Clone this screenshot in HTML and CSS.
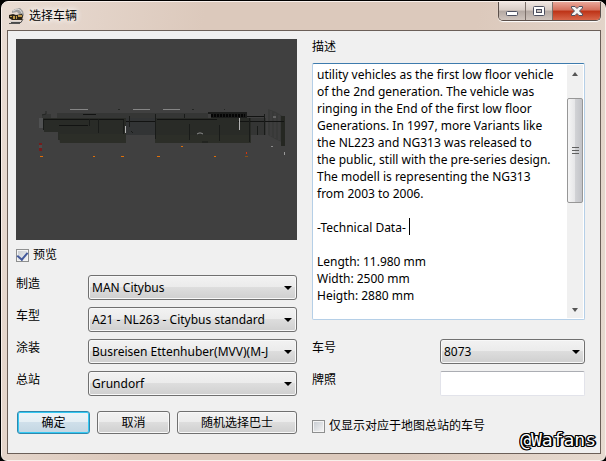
FILE: index.html
```html
<!DOCTYPE html>
<html lang="zh-CN">
<head>
<meta charset="utf-8">
<title>选择车辆</title>
<link rel="stylesheet" href="styles.css">
</head>
<body>
<main class="window">
  <header class="titlebar">
    <svg class="app-icon" width="16" height="16" viewBox="0 0 16 16" aria-hidden="true">
      <path d="M3 3L6 1 11 0 14 3 15 7 12 12 9 12 10 6 8 4 3 5Z" fill="#9d9d9d"/>
      <path d="M4 3L8 1 11 2 13 5" fill="none" stroke="#dcdcdc"/>
      <path d="M0 7L4 6 7 7 13 6 14 8 13 12 3 12 0 10Z" fill="#2b2418"/>
      <path d="M1 8h2v1H1zM4 8h2v3H4zM7 8h1v3H7zM9 7h4v2H9z" fill="#c09a4a"/>
      <path d="M2 14.500H12L14 11" fill="none" stroke="#4a4a4a"/>
      <path d="M1 13.500H11" stroke="#d5d0cc"/>
      <path d="M0 15.500H11" stroke="#555"/>
    </svg>
    <h1 class="title">选择车辆</h1>
    <div class="window-buttons">
      <button class="wb" type="button" aria-label="最小化"><svg class="min" width="12" height="5" viewBox="0 0 12 5"><rect x=".5" y=".5" width="11" height="4" rx="1" fill="#fff" stroke="#4d5060"/></svg></button>
      <button class="wb" type="button" aria-label="最大化"><svg width="12" height="10" viewBox="0 0 12 10"><rect x=".5" y=".5" width="11" height="9" rx="1" fill="#fff" stroke="#4d5060"/><rect x="3.500" y="3.500" width="5" height="3" fill="#c9c2be" stroke="#4d5060"/></svg></button>
      <button class="wb close" type="button" aria-label="关闭"><svg width="12" height="10" viewBox="0 0 12 10"><path d="M.5 .5H4L6 2.500 8 .5H11.500V2L8.500 5 11.500 8V9.500H8L6 7.500 4 9.500H.5V8L3.500 5 .5 2Z" fill="#f4f4f4" stroke="#4d5060"/></svg></button>
    </div>
  </header>
  <form class="client">
    <section class="column left">
      <svg class="preview" viewBox="0 0 281 201" role="img" aria-label="预览">
        <rect width="281" height="201" fill="#404040"/>
        <path d="M23 79H27V89H23Z" fill="#505152"/>
        <path d="M41 74H192V79H41ZM26 75H35V79H26Z" fill="#353635"/>
        <path d="M27 79H110V104H44V101H42V93H28V90H27Z" fill="#292b27"/>
        <path d="M110 79H139V96H110Z" fill="#323435"/>
        <path d="M139 79H235V104H139Z" fill="#292b27"/>
        <path d="M235 79H250V96H235Z" fill="#343534"/>
        <path d="M43 95H110V104H44ZM139 96H235V104H139Z" fill="#2c2e28"/>
        <path d="M252 70L260 73 268 78V104L261 101 252 96Z" fill="#383938"/>
        <path d="M255 72V97M259 74V99M263 76V101" stroke="#424342"/>
        <path d="M265 77H269V107H265Z" fill="#252722"/>
        <path d="M27 80.500H108M110 82.500H139M141 80.500H201M43 86.500H72M67 75.500H80M134 82.500H139M230 77.500H249M222 82.500H268" stroke="#121312"/>
        <path d="M192 73H231V79H195V75H192Z" fill="#1b1c1b"/>
        <path d="M195 76.500H229" stroke="#050505" stroke-width="3" stroke-dasharray="2 1"/>
        <path d="M27.500 80V91M73.500 80V87M82.500 80V94M107.500 81V95M113.500 77V88M168.500 75V79M173.500 85V101M139.500 75V100M233.500 79V103M241.500 87V96M248.500 75V96M203.500 86V102M115 92L117 94M186 103H192" stroke="#191b19"/>
        <path d="M26 76L30 75M30 72V75M102 70.500H104M176 70.500H178M208 70.500H209" stroke="#242624"/>
        <path d="M54 70.500H72M117 70.500H134M147 70.500H164" stroke="#858585"/>
        <path d="M109.500 87V94M223.500 79V91" stroke="#b3b3b3"/>
        <path d="M181 95L183 94H185L187 95M255 107.500H257M257 78H260" fill="none" stroke="#8b8b8b"/>
        <path d="M23 104H26V112H23Z" fill="#741c1c"/><path d="M23 106H26V109H23Z" fill="#4b4b4b"/>
        <path d="M24 117.500H27M77 117.500H79M105 117.500H108M141 117.500H144M165 107.500H167M198 117.500H200" stroke="#e06f08"/>
        <path d="M230.500 113V115" stroke="#d8320d"/><path d="M229 117.500H232" stroke="#895016"/>
        <path d="M268.500 113V116" stroke="#999"/>
      </svg>
      <label class="check"><input type="checkbox" checked>预览</label>
      <div class="fields">
        <label for="make">制造</label><div class="combo"><select id="make"><option>MAN Citybus</option></select></div>
        <label for="model">车型</label><div class="combo"><select id="model"><option>A21 - NL263 - Citybus standard</option></select></div>
        <label for="paint">涂装</label><div class="combo"><select id="paint"><option>Busreisen Ettenhuber(MVV)(M-J</option></select></div>
        <label for="depot">总站</label><div class="combo"><select id="depot"><option>Grundorf</option></select></div>
      </div>
      <div class="actions">
        <button class="btn default" type="button">确定</button>
        <button class="btn" type="button">取消</button>
        <button class="btn wide" type="button">随机选择巴士</button>
      </div>
    </section>
    <section class="column right">
      <label class="desc-label" for="desc">描述</label>
      <div class="desc">
        <textarea id="desc" wrap="off">utility vehicles as the first low floor vehicle
of the 2nd generation. The vehicle was
ringing in the End of the first low floor
Generations. In 1997, more Variants like
the NL223 and NG313 was released to
the public, still with the pre-series design.
The modell is representing the NG313
from 2003 to 2006.

-Technical Data-

Length: 11.980 mm
Width: 2500 mm
Heigth: 2880 mm</textarea>
        <div class="scrollbar" aria-hidden="true">
          <span class="arrow up"></span>
          <span class="thumb"><i></i><i></i><i></i></span>
          <span class="arrow down"></span>
        </div>
        <span class="caret"></span>
      </div>
      <div class="fields">
        <label for="number">车号</label><div class="combo"><select id="number"><option>8073</option></select></div>
        <label for="plate">牌照</label><input class="text" id="plate" type="text">
      </div>
      <label class="check depot-only"><input type="checkbox">仅显示对应于地图总站的车号</label>
    </section>
    <span class="watermark">@Wafans</span>
  </form>
</main>
</body>
</html>
```
FILE: styles.css
```css
* { box-sizing: border-box; }

body {
  margin: 0;
  background: #000;
  color: #000;
  font: 12px/16px "Noto Sans", "Noto Sans CJK SC", sans-serif;
}

button, select, input, textarea { font: inherit; color: inherit; margin: 0; }

.window {
  margin: 1px 0 0 1px;
  padding: 0 4px 6px 5px;
  min-height: calc(100vh - 1px);
  display: flex;
  flex-direction: column;
  border: 1px solid #f8efea;
  border-radius: 7px 7px 6px 6px;
  background: linear-gradient(100deg, #e9dcd3, #dcc9bc 30%, #dcc9bc 70%, #e6dad0);
}

.titlebar { height: 28px; display: flex; align-items: flex-start; }
.app-icon { margin: 6px 4px 0 2px; }
.title { flex: 1; margin: 6px 0 0; font-size: 12px; line-height: 16px; font-weight: 400; text-shadow: 0 0 6px #fff, 0 0 6px #fff; }

.window-buttons {
  display: flex;
  height: 19px;
  border: 1px solid #5b4f4a;
  border-top: 0;
  border-radius: 0 0 5px 5px;
  overflow: hidden;
  box-shadow: 0 1px 1px #fff;
}
.wb {
  width: 27px;
  padding: 0;
  border: 0;
  border-right: 1px solid #7c706a;
  display: grid;
  place-items: center;
  background: linear-gradient(#efe6e1, #d8cdc6 45%, #b3a8a2 50%, #cfc4bd);
}
.wb .min { margin-top: 5px; }
.wb.close { width: 47px; border: 0; background: linear-gradient(#e9a799, #d4705c 45%, #bd3216 50%, #d8664a); }

.client {
  position: relative;
  flex: 1;
  display: flex;
  align-items: flex-start;
  gap: 15px;
  padding: 8px 15px 8px 8px;
  border: 1px solid #6b5f58;
  background: #f0f0f0;
}
.column { display: flex; flex-direction: column; min-width: 0; }
.left { flex: 281; }
.right { flex: 273; }

.preview { display: block; width: 100%; height: auto; }

.check { display: flex; align-items: center; gap: 4px; height: 16px; margin-top: 7px; white-space: nowrap; }
.check input {
  appearance: none;
  width: 13px;
  height: 13px;
  border: 1px solid #8e8f8f;
  background: linear-gradient(135deg, #c5cad0, #f6f6f6);
  box-shadow: inset 0 0 0 1px #f4f4f4;
  display: grid;
  place-items: center;
}
.check input:checked::before {
  content: "";
  width: 5px;
  height: 8px;
  margin-bottom: 2px;
  border: solid #43599b;
  border-width: 0 2px 2px 0;
  transform: rotate(40deg);
}

.fields { display: grid; grid-template-columns: 72px 1fr; row-gap: 7px; margin-top: 12px; }
.fields label { padding-top: 1px; }
.right .fields { grid-template-columns: 128px 1fr; margin-top: 19px; }

.combo { position: relative; height: 25px; }
.combo::after {
  content: "";
  position: absolute;
  right: 5px;
  top: 11px;
  border: 4px solid transparent;
  border-top-color: #000;
  border-bottom: 0;
}
.combo select {
  appearance: none;
  width: 100%;
  height: 100%;
  padding: 0 19px 0 3px;
  border: 1px solid #707070;
  border-radius: 3px;
  background: linear-gradient(#f2f2f2, #ebebeb 49%, #dddddd 50%, #cfcfcf);
  box-shadow: inset 0 0 0 1px #f8f8f8;
}
.text { width: 100%; min-width: 0; height: 25px; padding: 0 4px; border: 1px solid #e2e3ea; border-top-color: #abadb3; border-radius: 2px; background: #fff; }

.actions { display: flex; gap: 7px; margin: 15px 0 0 1px; }
.btn {
  width: 73px;
  height: 23px;
  padding: 0;
  border: 1px solid #707070;
  border-radius: 3px;
  background: linear-gradient(#f2f2f2, #ebebeb 49%, #dddddd 50%, #cfcfcf);
  box-shadow: inset 0 0 0 1px #f8f8f8;
}
.btn.default { border-color: #2f88ad; box-shadow: inset 0 0 0 1px #35c9f3; background: linear-gradient(#eef4f8, #e4eef4 49%, #cfdfea 50%, #c3d6e2); }
.btn.wide { width: auto; flex: 1; }

.desc {
  position: relative;
  display: flex;
  height: 257px;
  margin-top: 8px;
  border: 1px solid #b5cfe7;
  border-top-color: #3d7bad;
  border-radius: 2px;
  background: #fff;
}
.desc textarea {
  flex: 1;
  min-width: 0;
  padding: 2px 0 0 4px;
  border: 0;
  outline: 0;
  resize: none;
  overflow: hidden;
  background: none;
  line-height: 17px;
}
.scrollbar { width: 16px; margin: 1px; display: flex; flex-direction: column; background: #f0f0f0; }
.arrow { height: 17px; margin-top: auto; display: grid; place-items: center; }
.up { height: 33px; margin: 0; padding-bottom: 16px; }
.arrow::before { content: ""; border: 3px solid transparent; }
.up::before { border-bottom: 4px solid #555; border-top: 0; }
.down::before { border-top: 4px solid #555; border-bottom: 0; }
.thumb {
  height: 105px;
  display: flex;
  flex-direction: column;
  align-items: center;
  justify-content: center;
  gap: 2px;
  border: 1px solid #979797;
  border-radius: 2px;
  background: linear-gradient(90deg, #f5f5f5, #e6e6e8 49%, #d2d3d6 50%, #c2c3c8);
}
.thumb i { width: 7px; height: 1px; background: #606060; }
.caret { position: absolute; left: 96px; top: 154px; width: 1px; height: 17px; background: #000; }

.depot-only { margin-top: 22px; }
.watermark {
  position: absolute;
  right: 4px;
  bottom: 2px;
  font: 18px/22px "DejaVu Sans Mono", monospace;
  color: #fff;
  text-shadow: 1px 0 #000, -1px 0 #000, 0 1px #000, 0 -1px #000, 1px 1px #000, -1px -1px #000, 1px -1px #000, -1px 1px #000, 2px 0 #000;
}
```
